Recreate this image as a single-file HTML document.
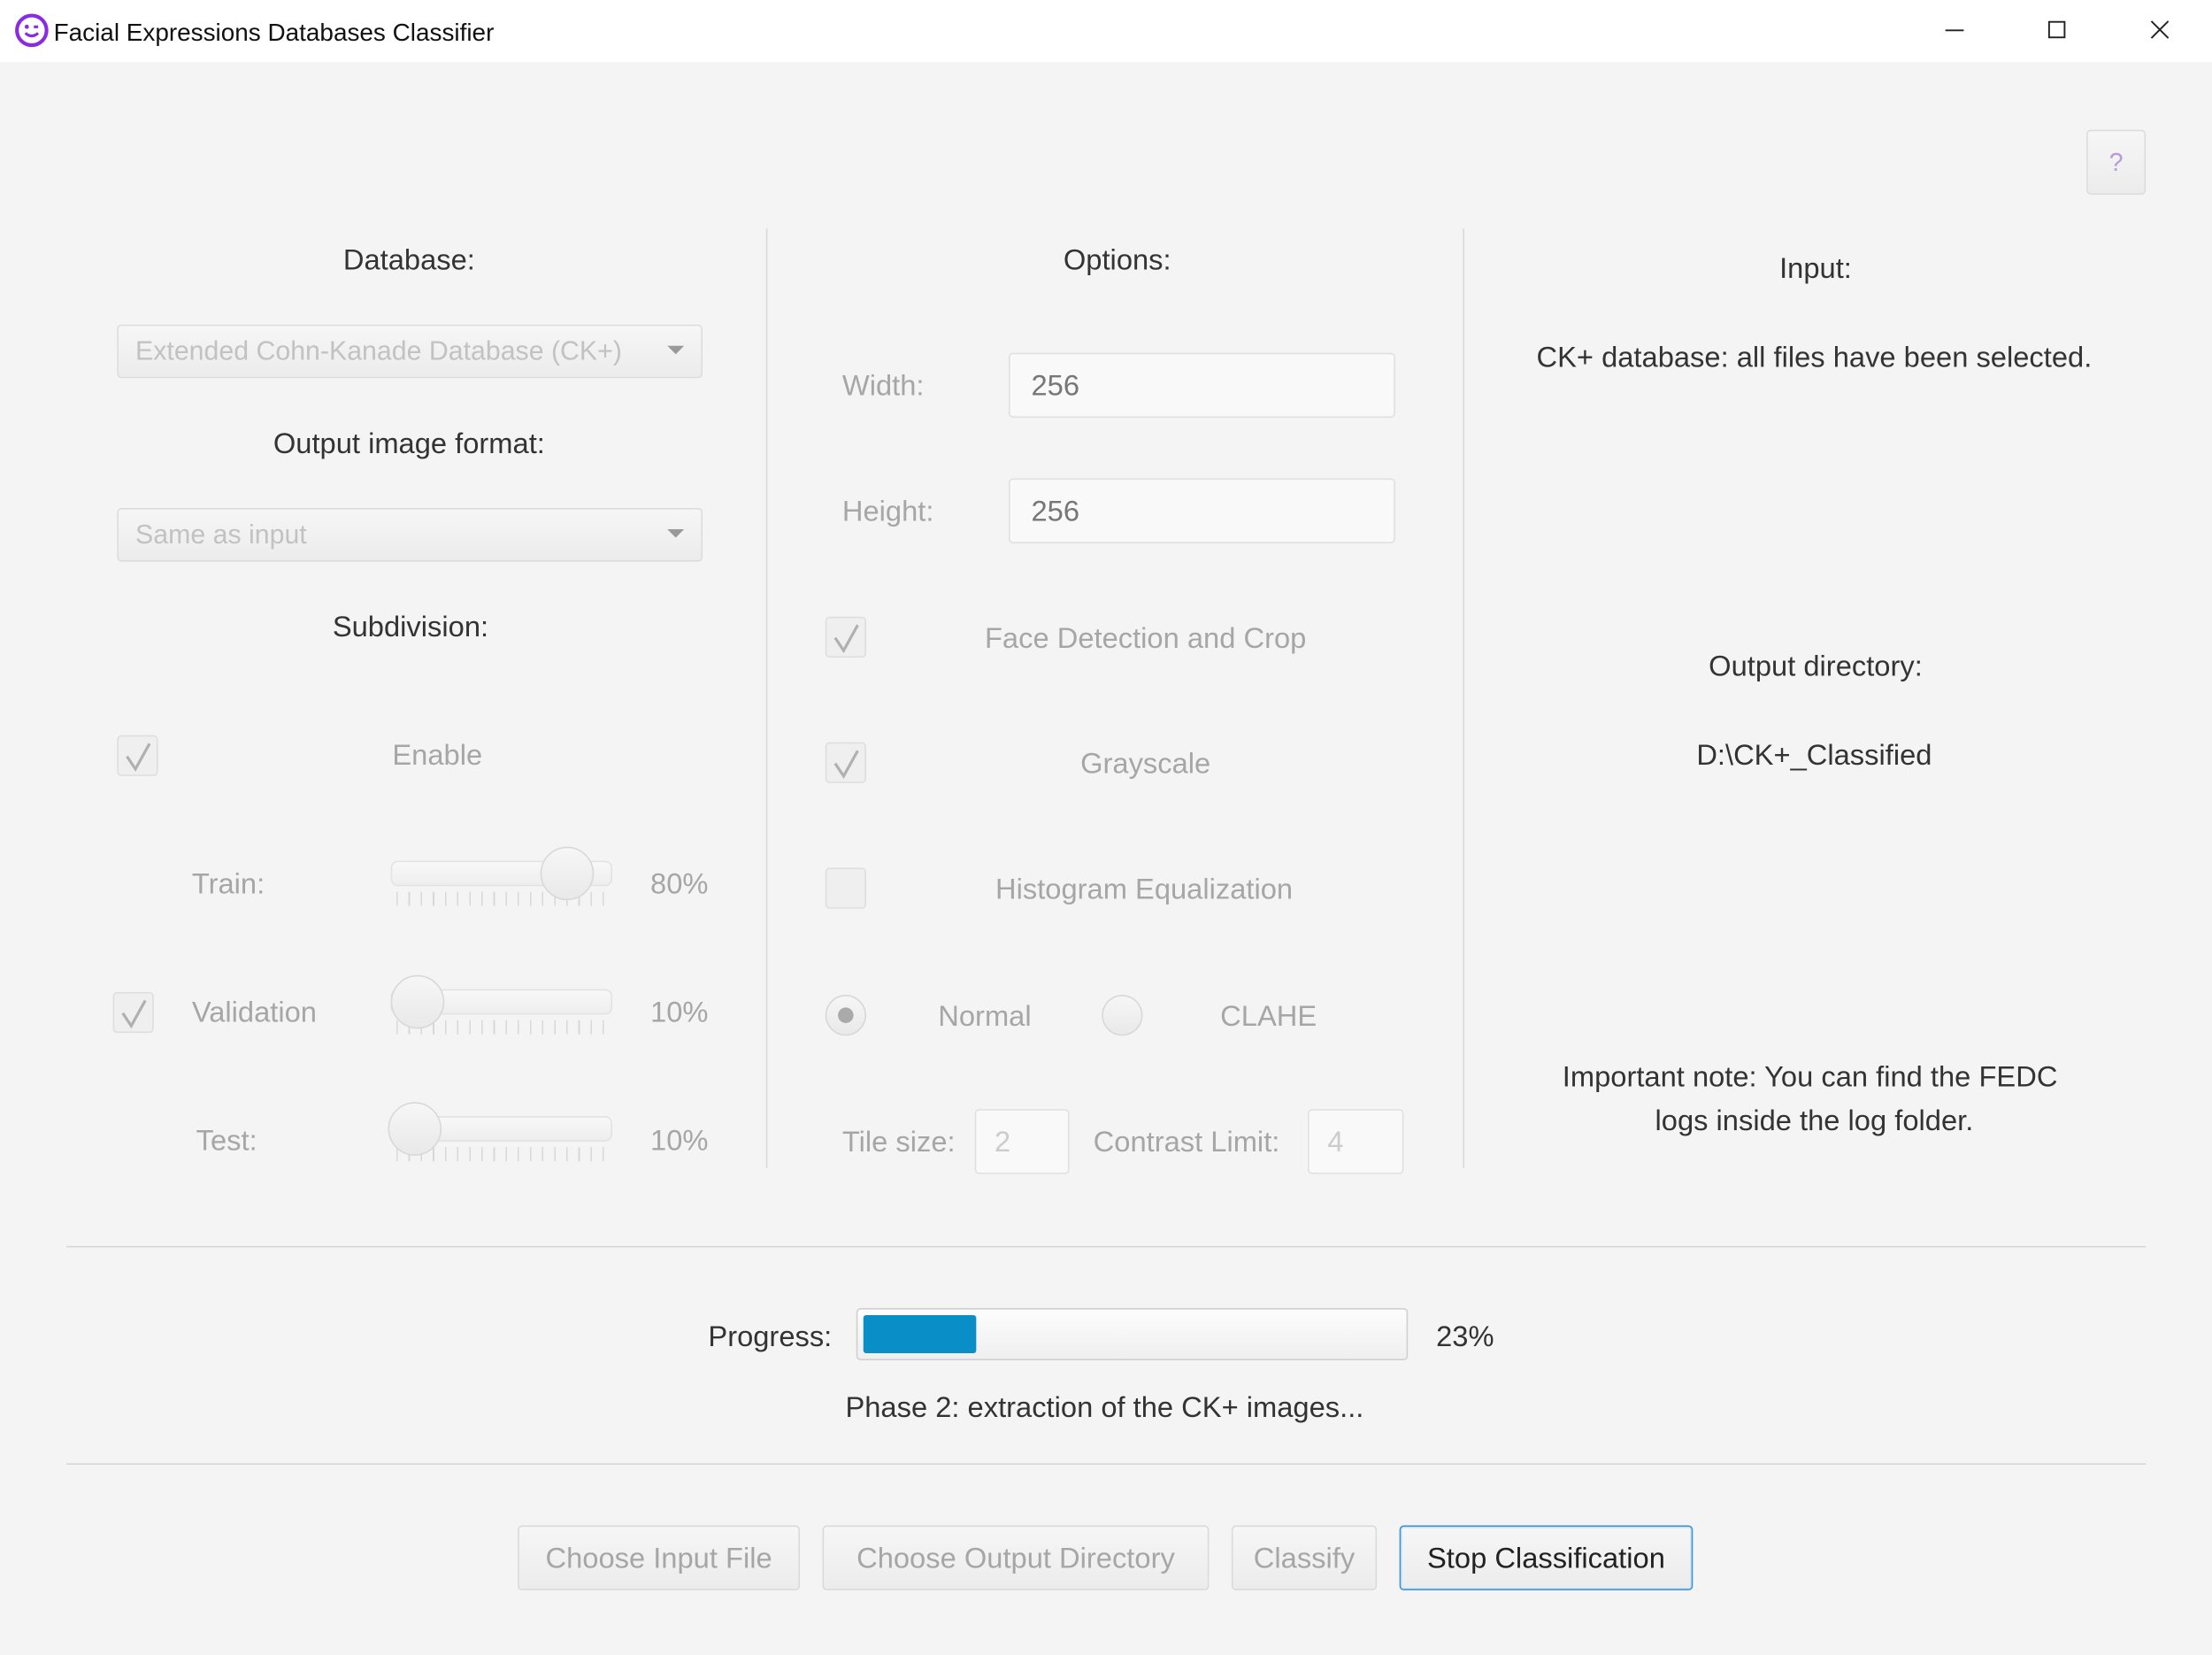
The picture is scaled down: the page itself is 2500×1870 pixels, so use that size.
<!DOCTYPE html>
<html><head><meta charset="utf-8"><style>
html,body{margin:0;padding:0;overflow:hidden;background:#f4f4f4}
#w{position:absolute;left:0;top:0;width:1568px;height:1173px;transform:scale(1.5944);transform-origin:0 0;background:#f4f4f4;font-family:"Liberation Sans",sans-serif;font-size:20.5px;color:#333}
.a{position:absolute;white-space:nowrap;line-height:24px;margin-top:1px}
.c{position:absolute;white-space:nowrap;line-height:24px;width:600px;text-align:center;margin-top:1px}
.d{color:#a6a6a6}
.box{position:absolute;box-sizing:border-box;border:1px solid #dcdcdc;border-radius:3px;background:linear-gradient(#f6f6f6,#ececec)}
.fld{position:absolute;box-sizing:border-box;border:1px solid #e0e0e0;border-radius:3px;background:#f9f9f9}
.cb{position:absolute;width:29px;height:29px;box-sizing:border-box;border:1px solid #dedede;border-radius:3px;background:#efefef}
.cb svg{position:absolute;left:3px;top:3px}
.trk{position:absolute;height:18px;box-sizing:border-box;border:1px solid #e2e2e2;border-radius:5px;background:linear-gradient(#f8f8f8,#eeeeee)}
.th{position:absolute;width:38px;height:38px;box-sizing:border-box;border:1.5px solid #d8d8d8;border-radius:50%;background:linear-gradient(#f6f6f6,#e9e9e9)}
.tk{position:absolute;height:10px;background:repeating-linear-gradient(90deg,#d8d8d8 0 1px,transparent 1px 8.6px)}
.hr{position:absolute;left:47px;width:1474px;height:1px;background:#d6d6d6}
.vr{position:absolute;top:162px;width:1px;height:666px;background:#d9d9d9}
.btn{position:absolute;top:1081px;height:46px;box-sizing:border-box;border:1px solid #dadada;border-radius:3px;background:linear-gradient(#f6f6f6,#ececec);color:#a6a6a6;text-align:center;line-height:46px}
</style></head><body><div id="w">
<div style="position:absolute;left:0;top:0;width:1568px;height:44px;background:#fff"></div>
<svg style="position:absolute;left:10px;top:9px" width="25" height="25" viewBox="0 0 25 25"><circle cx="12.5" cy="12.5" r="10.5" fill="none" stroke="#8a2be2" stroke-width="2.6"/><circle cx="9" cy="10" r="1.5" fill="#8a2be2"/><path d="M14 10h3" stroke="#8a2be2" stroke-width="2"/><path d="M8 14.5q4.5 4 9 0" fill="none" stroke="#8a2be2" stroke-width="2"/></svg>
<div class="a" style="left:38px;top:10px;font-size:17.5px;color:#111">Facial Expressions Databases Classifier</div>
<svg style="position:absolute;left:1378px;top:12px" width="165" height="20"><path d="M1 9.5h13" stroke="#222" stroke-width="1.2"/><rect x="74.5" y="3.5" width="11" height="11" fill="none" stroke="#222" stroke-width="1.2"/><path d="M147 3l12 12M159 3l-12 12" stroke="#222" stroke-width="1.2"/></svg>
<div class="box" style="left:1479px;top:92px;width:42px;height:46px;text-align:center;line-height:44px;color:#b79ad8;font-size:18px">?</div>
<div class="vr" style="left:543px"></div><div class="vr" style="left:1037px"></div>

<div class="c" style="left:-10px;top:172px">Database:</div>
<div class="box" style="left:83px;top:230px;width:415px;height:38px"></div>
<div class="a d" style="left:96px;top:237px;color:#c2c2c2;font-size:19px">Extended Cohn-Kanade Database (CK+)</div>
<svg style="position:absolute;left:473px;top:245px" width="14" height="8"><path d="M0 0h12l-6 6z" fill="#999"/></svg>
<div class="c" style="left:-10px;top:302px">Output image format:</div>
<div class="box" style="left:83px;top:360px;width:415px;height:38px"></div>
<div class="a" style="left:96px;top:367px;color:#c2c2c2;font-size:19px">Same as input</div>
<svg style="position:absolute;left:473px;top:375px" width="14" height="8"><path d="M0 0h12l-6 6z" fill="#999"/></svg>
<div class="c" style="left:-9px;top:432px">Subdivision:</div>

<div class="cb" style="left:83px;top:521px"><svg width="22" height="22"><path d="M3 11l6 9 10-18" fill="none" stroke="#b0b0b0" stroke-width="2"/></svg></div>
<div class="c d" style="left:10px;top:523px">Enable</div>
<div class="a d" style="left:136px;top:614px">Train:</div>
<div class="trk" style="left:277px;top:610px;width:157px"></div><div class="tk" style="left:281px;top:632px;width:150px"></div>
<div class="th" style="left:383px;top:600px"></div>
<div class="a d" style="left:461px;top:614px">80%</div>
<div class="cb" style="left:80px;top:703px"><svg width="22" height="22"><path d="M3 11l6 9 10-18" fill="none" stroke="#b0b0b0" stroke-width="2"/></svg></div>
<div class="a d" style="left:136px;top:705px">Validation</div>
<div class="trk" style="left:277px;top:701px;width:157px"></div><div class="tk" style="left:281px;top:723px;width:150px"></div>
<div class="th" style="left:277px;top:691px"></div>
<div class="a d" style="left:461px;top:705px">10%</div>
<div class="a d" style="left:139px;top:796px">Test:</div>
<div class="trk" style="left:277px;top:791px;width:157px"></div><div class="tk" style="left:281px;top:813px;width:150px"></div>
<div class="th" style="left:275px;top:781px"></div>
<div class="a d" style="left:461px;top:796px">10%</div>

<div class="c" style="left:492px;top:172px">Options:</div>
<div class="a d" style="left:597px;top:261px">Width:</div>
<div class="fld" style="left:715px;top:250px;width:274px;height:46px"></div>
<div class="a" style="left:731px;top:261px;color:#777">256</div>
<div class="a d" style="left:597px;top:350px">Height:</div>
<div class="fld" style="left:715px;top:339px;width:274px;height:46px"></div>
<div class="a" style="left:731px;top:350px;color:#777">256</div>
<div class="cb" style="left:585px;top:437px"><svg width="22" height="22"><path d="M3 11l6 9 10-18" fill="none" stroke="#b0b0b0" stroke-width="2"/></svg></div>
<div class="c d" style="left:512px;top:440px">Face Detection and Crop</div>
<div class="cb" style="left:585px;top:526px"><svg width="22" height="22"><path d="M3 11l6 9 10-18" fill="none" stroke="#b0b0b0" stroke-width="2"/></svg></div>
<div class="c d" style="left:512px;top:529px">Grayscale</div>
<div class="cb" style="left:585px;top:615px"></div>
<div class="c d" style="left:511px;top:618px">Histogram Equalization</div>
<div class="th" style="left:585px;top:705px;width:29px;height:29px;border-width:1px"></div>
<div style="position:absolute;left:594px;top:714px;width:11px;height:11px;border-radius:50%;background:#aaa"></div>
<div class="a d" style="left:665px;top:708px">Normal</div>
<div class="th" style="left:781px;top:705px;width:29px;height:29px;border-width:1px"></div>
<div class="a d" style="left:865px;top:708px">CLAHE</div>
<div class="a d" style="left:597px;top:797px">Tile size:</div>
<div class="fld" style="left:691px;top:786px;width:67px;height:46px"></div>
<div class="a" style="left:705px;top:797px;color:#ccc">2</div>
<div class="a d" style="left:775px;top:797px">Contrast Limit:</div>
<div class="fld" style="left:927px;top:786px;width:68px;height:46px"></div>
<div class="a" style="left:941px;top:797px;color:#ccc">4</div>

<div class="c" style="left:987px;top:178px">Input:</div>
<div class="c" style="left:986px;top:241px">CK+ database: all files have been selected.</div>
<div class="c" style="left:987px;top:460px">Output directory:</div>
<div class="c" style="left:986px;top:523px">D:\CK+_Classified</div>
<div class="c" style="left:983px;top:751px">Important note: You can find the FEDC</div>
<div class="c" style="left:986px;top:782px">logs inside the log folder.</div>

<div class="hr" style="top:883px"></div>
<div class="a" style="left:502px;top:935px">Progress:</div>
<div class="fld" style="left:607px;top:927px;width:391px;height:37px;background:linear-gradient(#fdfdfd,#efefef);border-color:#d0d0d0"></div>
<div style="position:absolute;left:612px;top:932px;width:80px;height:27px;background:#0a8ec8;border-radius:2px"></div>
<div class="a" style="left:1018px;top:935px">23%</div>
<div class="c" style="left:483px;top:985px">Phase 2: extraction of the CK+ images...</div>
<div class="hr" style="top:1037px"></div>

<div class="btn" style="left:367px;width:200px">Choose Input File</div>
<div class="btn" style="left:583px;width:274px">Choose Output Directory</div>
<div class="btn" style="left:873px;width:103px">Classify</div>
<div class="btn" style="left:992px;width:208px;border:1.5px solid #3a93d6;color:#222;box-shadow:inset 0 0 0 1px #cfe6f7">Stop Classification</div>
</div></body></html>
